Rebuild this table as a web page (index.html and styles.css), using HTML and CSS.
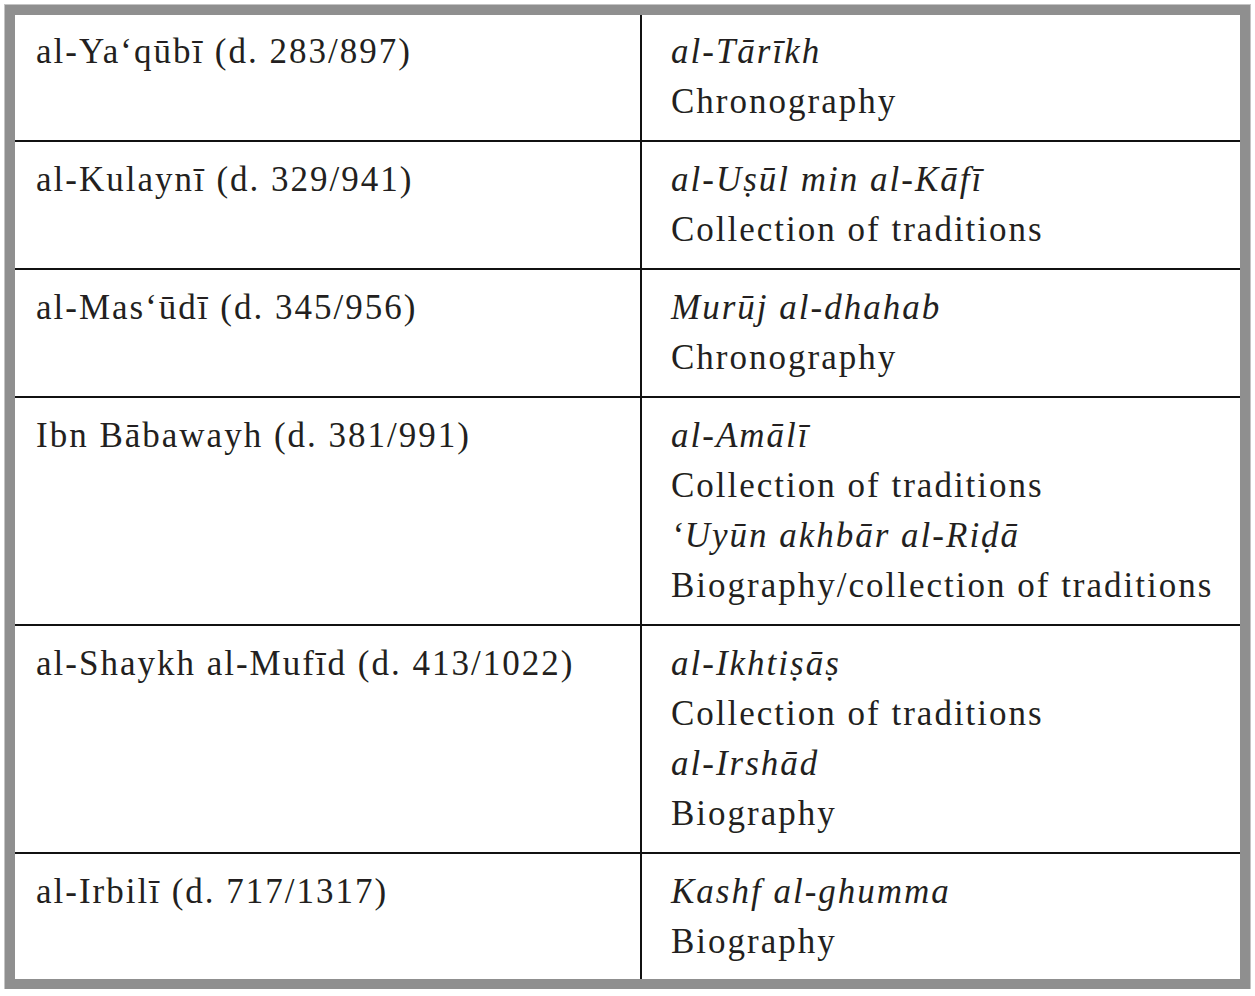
FILE: index.html
```html
<!DOCTYPE html>
<html>
<head>
<meta charset="utf-8">
<link rel="stylesheet" href="styles.css">
</head>
<body>
<table class="works">
  <tr class="first">
    <td class="author">al-Ya‘qūbī (d. 283/897)</td>
    <td class="work"><i>al-Tārīkh</i><br>Chronography</td>
  </tr>
  <tr>
    <td class="author">al-Kulaynī (d. 329/941)</td>
    <td class="work"><i>al-Uṣūl min al-Kāfī</i><br>Collection of traditions</td>
  </tr>
  <tr>
    <td class="author">al-Mas‘ūdī (d. 345/956)</td>
    <td class="work"><i>Murūj al-dhahab</i><br>Chronography</td>
  </tr>
  <tr>
    <td class="author">Ibn Bābawayh (d. 381/991)</td>
    <td class="work"><i>al-Amālī</i><br>Collection of traditions<br><i>‘Uyūn akhbār al-Riḍā</i><br>Biography/collection of traditions</td>
  </tr>
  <tr>
    <td class="author">al-Shaykh al-Mufīd (d. 413/1022)</td>
    <td class="work"><i>al-Ikhtiṣāṣ</i><br>Collection of traditions<br><i>al-Irshād</i><br>Biography</td>
  </tr>
  <tr class="last">
    <td class="author">al-Irbilī (d. 717/1317)</td>
    <td class="work"><i>Kashf al-ghumma</i><br>Biography</td>
  </tr>
</table>
</body>
</html>
```
FILE: styles.css
```css
html, body {
  margin: 0;
  padding: 0;
  background: #ffffff;
}
body {
  padding: 5px 0 0 5px;
}
.works {
  width: 1245px;
  border-collapse: separate;
  border-spacing: 0;
  border: 10px solid #8f8f8f;
  box-shadow: 0 0 0 1px #c4c4c4;
  font-family: "Liberation Serif", "Times New Roman", serif;
  font-size: 35px;
  letter-spacing: 2px;
  line-height: 50px;
  color: #231f20;
}
.works td {
  vertical-align: top;
  padding: 13px 0 13px 0;
  border-bottom: 2px solid #111111;
  white-space: nowrap;
}
.works tr.first td {
  padding-top: 12px;
}
.works tr.last td {
  border-bottom: none;
  padding-bottom: 12px;
}
.author {
  width: 604px;
  padding-left: 21px !important;
  border-right: 2px solid #111111;
}
.work {
  padding-left: 29px !important;
}
.works i {
  font-style: italic;
}
```
